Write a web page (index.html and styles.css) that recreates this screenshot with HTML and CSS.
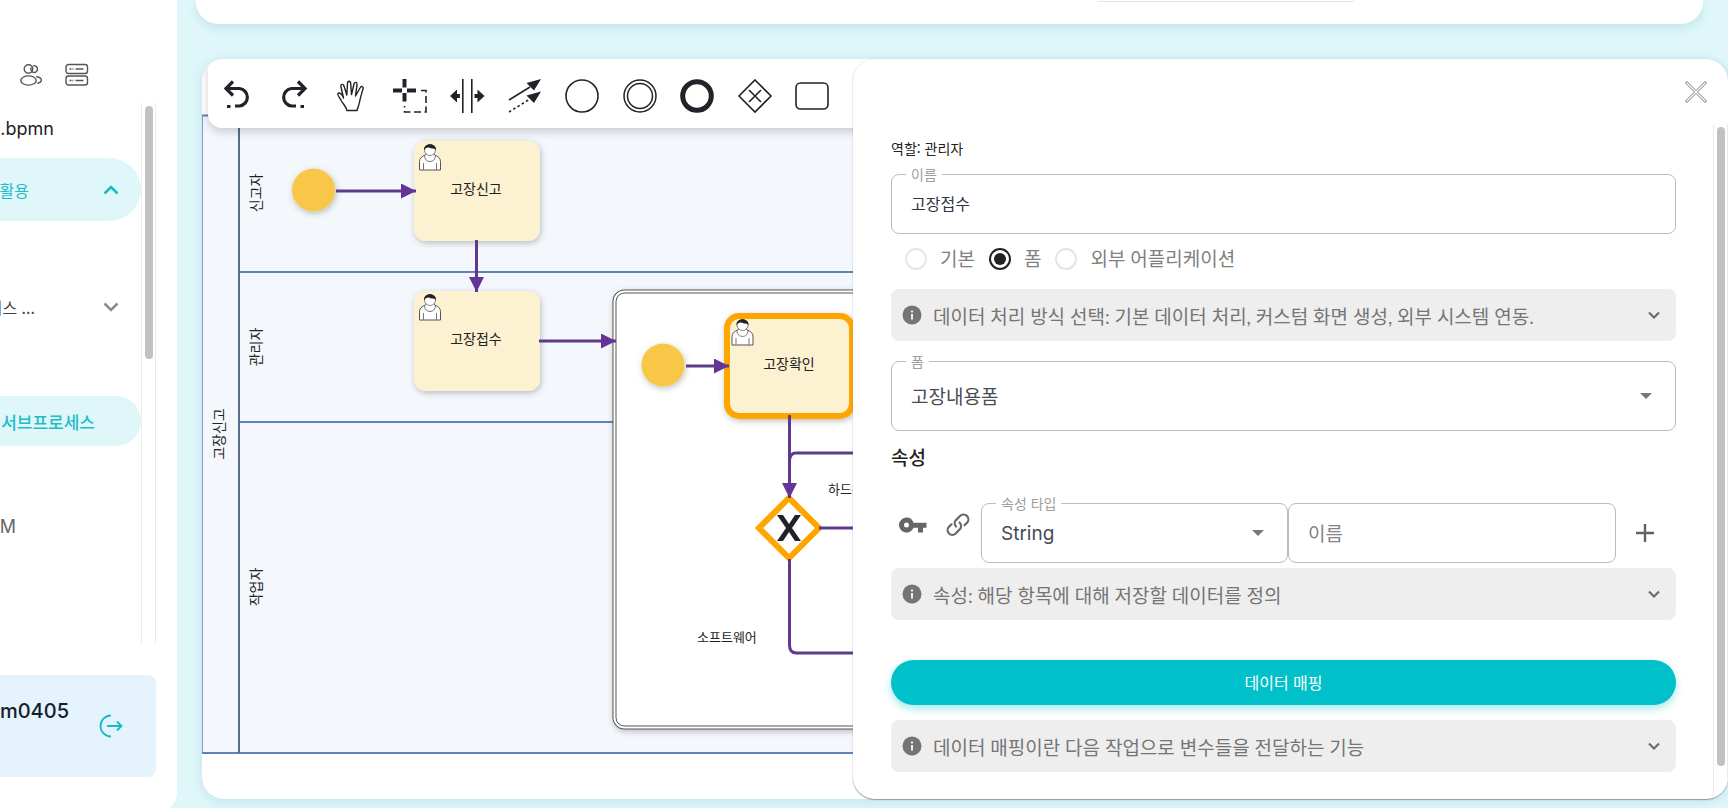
FILE: index.html
```
<!DOCTYPE html>
<html lang="ko">
<head>
<meta charset="utf-8">
<title>고장신고</title>
<link rel="stylesheet" href="styles.css">
</head>
<body>
<div class="app">
  <aside class="sidebar">
    <div class="quick">
      <button class="icon-btn" aria-label="사용자"><svg width="24" height="24" viewBox="0 0 24 24" fill="none" stroke="#555" stroke-width="1.4"><circle cx="9.5" cy="6" r="4.3"/><path d="M14 2.8a3.4 3.4 0 1 1-.6 6.2M12.500 4.500a3.400 3.400 0 0 0 .9 4.600"/><ellipse cx="9.500" cy="17.500" rx="7.700" ry="4.600"/><path d="M17.700 13.700c3 .5 4.700 1.800 4.700 3.400s-1.300 2.600-3.600 3.100" stroke-linecap="round"/></svg></button>
      <button class="icon-btn" aria-label="서버"><svg width="24" height="24" viewBox="0 0 24 24" fill="none" stroke="#555" stroke-width="1.4"><rect x="1" y="1.500" width="21.500" height="9" rx="2.500"/><rect x="1" y="13" width="21.500" height="9" rx="2.500"/><path d="M4.500 6h2m1 0h1m2 0h8M4.500 17.500h2m1 0h1m2 0h8"/></svg></button>
    </div>
    <nav class="side-scroll">
      <div class="side-list">
        <a class="item file" href="#"><span class="cut cut-file">.bpmn</span></a>
        <a class="item group active" href="#"><span class="cut cut-group">활용</span><svg class="chev" width="16" height="10" viewBox="0 0 16 10"><path d="M1.500 8.500 8 2l6.500 6.500"/></svg></a>
        <a class="item group closed" href="#"><span class="cut cut-more">비스 ...</span><svg class="chev" width="16" height="10" viewBox="0 0 16 10"><path d="M1.500 1.500 8 8l6.500-6.500"/></svg></a>
        <a class="item leaf active" href="#"><span class="cut cut-leaf">서브프로세스</span></a>
        <a class="item last" href="#"><span class="cut cut-last">M</span></a>
      </div>
      <div class="track side-track"><div class="thumb side-thumb"></div></div>
    </nav>
    <div class="user">
      <span class="cut cut-user">m0405</span>
      <button class="icon-btn logout" aria-label="로그아웃"><svg width="24" height="24" viewBox="0 0 24 24" fill="none" stroke="#11bccb" stroke-width="1.800"><path d="M12 1.500a10.500 10.500 0 0 0 0 21M8 12h14M18 7.500l4.500 4.500-4.500 4.500"/></svg></button>
    </div>
  </aside>

  <main class="main">
    <section class="top-card"><div class="top-box"></div></section>
    <section class="board">
      <div class="canvas">
        <svg class="diagram" width="100%" height="100%" font-size="14">
          <defs>
            <filter id="soft" x="-20%" y="-20%" width="140%" height="150%"><feDropShadow dx="1" dy="2" stdDeviation="3" flood-color="#000" flood-opacity=".25"/></filter>
            <marker id="tip" markerUnits="userSpaceOnUse" markerWidth="16" markerHeight="16" refX="15" refY="7.500" orient="auto"><path d="M0 0 15 7.500 0 15z" fill="#663399"/></marker>
            <g id="person"><path d="M-10.500 24V15.500q0-4.500 6-6.500l1.500-3.500h6l1.500 3.500q6 2 6 6.500V24z" fill="#fff" stroke="#555" stroke-width="1"/><path d="M-6.500 24v-7M6.500 24v-7M-5.500 9.500c0 8 11 8 11 0" fill="none" stroke="#777"/><circle cy="4" r="5.500" fill="#fff" stroke="#555" stroke-width=".7"/><path d="M-6 4.500C-7-4 7-4 6 4.500 4.500 1.500 2.500 3.500 0 2-2 1-4.500 1.500-6 4.500z" fill="#222"/></g>
          </defs>
          <g transform="translate(-202 -59)">
            <rect x="202" y="115" width="1600" height="638" fill="#f4f8fc"/>
            <path d="M202.500 115v638" stroke="#7a9ccf"/>
            <path d="M202 115.500h1600M240 272h1600M240 422h1600M202 753h1600" stroke="#5f82b8" stroke-width="2"/>
            <path d="M239 115v638" stroke="#5a6c8c" stroke-width="2"/>
            <g class="lane-names">
              <text transform="translate(224 434) rotate(-90)">고장신고</text>
              <text transform="translate(261 193) rotate(-90)">신고자</text>
              <text transform="translate(261 347) rotate(-90)">관리자</text>
              <text transform="translate(261 587) rotate(-90)">작업자</text>
            </g>
            <rect x="614.500" y="291.500" width="500" height="436" rx="10" fill="#fff" stroke="#555" stroke-width="4" filter="url(#soft)"/>
            <rect x="614.500" y="291.500" width="500" height="436" rx="10" fill="none" stroke="#fff" stroke-width="2"/>
            <g filter="url(#soft)">
              <rect x="414" y="141" width="126" height="100" rx="12" fill="#fcf1d0"/>
              <rect x="414" y="291" width="126" height="100" rx="12" fill="#fcf1d0"/>
              <circle cx="313.500" cy="190" r="21.500" fill="#f9c747"/>
              <circle cx="663" cy="365" r="21.500" fill="#f9c747"/>
              <rect x="727" y="316" width="125" height="100" rx="12" fill="#fcf1d0" stroke="#ffa500" stroke-width="6"/>
            </g>
            <path d="M789 498 819 528 789 558 759 528z" fill="#fff" stroke="#ffa500" stroke-width="6"/>
            <path d="M777 515h6l6 9 6-9h6l-9 13 9 13h-6l-6-9-6 9h-6l9-13z" fill="#222328"/>
            <g fill="none" stroke="#5f3a8c" stroke-width="3" >
              <g marker-end="url(#tip)">
                <path d="M336 191h80"/><path d="M476.500 240v52"/><path d="M539 341h77"/><path d="M686 366h43"/><path d="M789.500 415v83"/>
              </g>
              <path d="M789.500 462q0-9 6-9H900M819 528h80M789.500 559v86q0 8 7 8H900"/>
            </g>
            <use href="#person" x="430" y="146"/><use href="#person" x="430" y="296"/><use href="#person" x="742.500" y="321"/>
            <g class="node-names">
              <text x="476" y="194">고장신고</text><text x="476" y="344">고장접수</text><text x="789" y="369">고장확인</text>
            </g>
            <g class="edge-names"><text x="828" y="494">하드웨어</text><text x="697" y="642">소프트웨어</text></g>
          </g>
        </svg>
        <div class="toolbar">
          <button class="tool" aria-label="실행 취소"><svg width="34" height="34" viewBox="0 0 34 34" fill="none" stroke="#222328" stroke-width="3.200"><path d="M13 2.500 6 9.500l7 7M6 9.500h13.500a8.800 8.800 0 0 1 0 17.500H15M7 27.500h3.500"/></svg></button>
          <button class="tool" aria-label="다시 실행"><svg width="34" height="34" viewBox="0 0 34 34" fill="none" stroke="#222328" stroke-width="3.200"><path d="m20 2.500 7 7-7 7M27 9.500H13.500a8.800 8.800 0 0 0 0 17.500H18M22.500 27.500H26"/></svg></button>
          <button class="tool" aria-label="손 도구"><svg width="34" height="34" viewBox="0 0 34 34" fill="#fff" stroke="#222328" stroke-width="1.400" stroke-linejoin="round"><path d="M12 31.500c-1-4-3.500-6-5.500-9.500-1.500-3-4.500-6-3.500-7.500 1.500-1.500 4.500 1 5.500 4.500L6 8c-.6-3 2.300-3.500 3-1l2.800 9L12.500 4.500c0-3 3-3 3.200 0l.8 11L19 5c.7-2.500 3.500-2 3 .8L20.500 17l4.500-8c1.300-2.500 3.800-1.300 3 1-1.500 5-2.500 8-3.500 13-.5 3-1.500 5-2.500 8.500z"/></svg></button>
          <button class="tool" aria-label="올가미"><svg width="34" height="34" viewBox="0 0 34 34" fill="none" stroke="#222328"><path stroke-width="4" d="M11.500 0v8.500M11.500 14v8.500M0 11.500h9M14 11.500h9"/><path stroke-width="1.600" stroke-dasharray="7 3.500" d="M28 11.500h5v21.500h-21.500v-6"/></svg></button>
          <button class="tool" aria-label="공간 도구"><svg width="34" height="34" viewBox="0 0 34 34" fill="#222328"><path d="M12 0h1.600v34H12zM21 0h1.600v34H21zM0 17l7-6.500V15h3v4H7v4.500zM34.500 17l-7-6.500V15h-3v4h3v4.500z"/></svg></button>
          <button class="tool" aria-label="연결 도구"><svg width="34" height="34" viewBox="0 0 34 34" fill="#222328"><path d="M33 0 26 11.500 18.500 4zM33 12.500 26 24l-7.500-7.500z"/><path d="M1 21 22 8" stroke="#222328" stroke-width="1.600"/><path d="m1 33 21-13" stroke="#222328" stroke-width="1.600" stroke-dasharray="2.500 2.500"/></svg></button>
          <button class="tool" aria-label="시작 이벤트"><svg width="34" height="34" viewBox="0 0 34 34" fill="none" stroke="#222328" stroke-width="1.600"><circle cx="17" cy="17" r="16"/></svg></button>
          <button class="tool" aria-label="중간 이벤트"><svg width="34" height="34" viewBox="0 0 34 34" fill="none" stroke="#222328" stroke-width="1.500"><circle cx="17" cy="17" r="16"/><circle cx="17" cy="17" r="12.500"/></svg></button>
          <button class="tool" aria-label="종료 이벤트"><svg width="34" height="34" viewBox="0 0 34 34" fill="none" stroke="#222328" stroke-width="5"><circle cx="17" cy="17" r="14.300"/></svg></button>
          <button class="tool" aria-label="게이트웨이"><svg width="34" height="34" viewBox="0 0 34 34" fill="none" stroke="#222328" stroke-width="1.600"><path d="m17 1 16 16-16 16L1 17zM11 11l12 12M23 11 11 23"/></svg></button>
          <button class="tool" aria-label="작업"><svg width="34" height="34" viewBox="0 0 34 34" fill="none" stroke="#222328" stroke-width="1.600"><rect x="1" y="4" width="32" height="26" rx="4.500"/></svg></button>
          <button class="tool" aria-label="서브 프로세스"><svg width="34" height="34" viewBox="0 0 34 34" fill="none" stroke="#222328" stroke-width="1.600"><rect x="1" y="6" width="32" height="22" rx="4"/></svg></button>
        </div>
      </div>

      <section class="panel">
        <header class="panel-head">
          <button class="icon-btn" aria-label="닫기"><svg width="22" height="22" viewBox="0 0 22 22" fill="#fff" stroke="#444" stroke-width=".7"><path d="M1 2.500V1h1.500L11 9.500 19.500 1H21v1.500L12.500 11l8.500 8.500V21h-1.500L11 12.500 2.500 21H1v-1.500L9.500 11z"/></svg></button>
        </header>
        <div class="panel-scroll">
          <form class="form">
            <p class="role">역할: 관리자</p>
            <div class="field">
              <label for="name">이름</label>
              <input id="name" class="control" type="text" value="고장접수">
            </div>
            <div class="radios">
              <label class="radio"><input type="radio" name="kind"><span>기본</span></label>
              <label class="radio"><input type="radio" name="kind" checked><span>폼</span></label>
              <label class="radio"><input type="radio" name="kind"><span>외부 어플리케이션</span></label>
            </div>
            <button type="button" class="hint"><svg width="20" height="20" viewBox="0 0 20 20"><circle cx="10" cy="10" r="9.500" fill="#757575"/><path d="M9 9h2v5.500H9zM9 5.500h2v2H9z" fill="#eee"/></svg><span>데이터 처리 방식 선택: 기본 데이터 처리, 커스텀 화면 생성, 외부 시스템 연동.</span><svg width="12" height="8" viewBox="0 0 12 8"><path class="hint-chev" d="m1 1.500 5 5 5-5"/></svg></button>
            <div class="field field-form">
              <label for="form">폼</label>
              <select id="form" class="control tall"><option>고장내용폼</option></select>
              <svg class="caret" width="12" height="6" viewBox="0 0 12 6"><path d="M0 0h12L6 6z"/></svg>
            </div>
            <h2 class="title">속성</h2>
            <div class="attrs">
              <button type="button" class="icon-btn key" aria-label="키"><svg width="28" height="16" viewBox="0 0 28 16"><path fill="#666" fill-rule="evenodd" d="M7.500.5a7.500 7.500 0 1 0 7 10.200H19V15.500h5v-4.800h3.500v-5h-13A7.500 7.500 0 0 0 7.500.5zm0 5a2.500 2.500 0 1 1 0 5 2.500 2.500 0 0 1 0-5z"/></svg></button>
              <button type="button" class="icon-btn link" aria-label="연결"><svg width="24" height="24" viewBox="0 0 24 24" fill="none" stroke="#666" stroke-width="2.200" stroke-linecap="round"><path d="M10 13.500a4.700 4.700 0 0 1 0-6.500l4-4a4.700 4.700 0 0 1 7 6.700l-2.500 2.500"/><path d="M13.500 9.500a4.700 4.700 0 0 1 .5 6.500l-4.300 4.500A4.700 4.700 0 0 1 3 13.800l2.500-2.500"/></svg></button>
              <div class="field type">
                <label for="type">속성 타입</label>
                <select id="type" class="control latin"><option>String</option></select>
                <svg class="caret" width="12" height="6" viewBox="0 0 12 6"><path d="M0 0h12L6 6z"/></svg>
              </div>
              <div class="field attr-name">
                <input class="control large" type="text" placeholder="이름" aria-label="이름">
              </div>
              <button type="button" class="icon-btn add" aria-label="추가"><svg width="18" height="18" viewBox="0 0 18 18"><path d="M9 0v18M0 9h18" stroke="#616161" stroke-width="2.400"/></svg></button>
            </div>
            <button type="button" class="hint"><svg width="20" height="20" viewBox="0 0 20 20"><circle cx="10" cy="10" r="9.500" fill="#757575"/><path d="M9 9h2v5.500H9zM9 5.500h2v2H9z" fill="#eee"/></svg><span>속성: 해당 항목에 대해 저장할 데이터를 정의</span><svg width="12" height="8" viewBox="0 0 12 8"><path class="hint-chev" d="m1 1.500 5 5 5-5"/></svg></button>
            <button type="button" class="mapping">데이터 매핑</button>
            <button type="button" class="hint"><svg width="20" height="20" viewBox="0 0 20 20"><circle cx="10" cy="10" r="9.500" fill="#757575"/><path d="M9 9h2v5.500H9zM9 5.500h2v2H9z" fill="#eee"/></svg><span>데이터 매핑이란 다음 작업으로 변수들을 전달하는 기능</span><svg width="12" height="8" viewBox="0 0 12 8"><path class="hint-chev" d="m1 1.500 5 5 5-5"/></svg></button>
          </form>
          <div class="track panel-track"><div class="thumb panel-thumb"></div></div>
        </div>
      </section>
    </section>
  </main>
</div>
</body>
</html>
```
FILE: styles.css
```
* { box-sizing: border-box; }
body { margin: 0; background: #dff7f9; color: #222; font-family: "Noto Sans CJK KR", "Noto Sans", sans-serif; }
button, input, select { font: inherit; }
a { color: inherit; text-decoration: none; }
.app { display: flex; height: 100vh; overflow: hidden; }
.icon-btn { display: flex; align-items: center; justify-content: center; padding: 0; border: 0; background: none; cursor: pointer; }

/* Sidebar */
.sidebar { display: flex; flex-direction: column; flex: none; width: 177px; height: calc(100vh + 4px); background: #fff; border-radius: 0 0 20px 0; }
.quick { display: flex; gap: 22px; padding: 63px 0 16px 19px; }
.side-scroll { display: flex; flex: 1; width: 156px; min-height: 0; }
.side-list { flex: 1; min-width: 0; }
.item { display: flex; align-items: center; color: #444; }
.cut { display: flex; justify-content: flex-end; overflow: hidden; white-space: nowrap; }
.file { height: 55px; padding-bottom: 4px; color: #222; font: 18px Inter, sans-serif; }
.cut-file { width: 54px; }
.group { justify-content: space-between; height: 63px; padding-right: 22px; border-radius: 0 32px 32px 0; font-size: 16px; }
.cut-group { width: 29px; }
.cut-more { width: 35px; }
.closed { margin-top: 54px; }
.leaf { height: 50px; margin-top: 58px; border-radius: 0 25px 25px 0; font-size: 17px; font-weight: 500; }
.cut-leaf { width: 95px; }
.last { height: 50px; margin-top: 55px; color: #666; font: 18px Inter, sans-serif; }
.cut-last { width: 16px; }
.active { background: #dff7f8; color: #1fbccb; }
.chev { fill: none; stroke: #8c8c8c; stroke-width: 2.5px; }
.active .chev { stroke: #18bcc8; }
.track { border: solid #ebebeb; border-width: 0 1px; background: #fff; }
.thumb { width: 8px; border-radius: 4px; background: #c1c1c1; }
.side-track { width: 15px; padding: 3px 0 0 3px; }
.side-thumb { height: 253px; }
.user { display: flex; align-items: center; justify-content: space-between; width: 156px; height: 102px; margin: 31px 0 35px; padding-right: 33px; border-radius: 0 8px 8px 0; background: #e5f3fc; }
.cut-user { width: 69px; padding-bottom: 30px; color: #14202c; font: 500 20px Inter, sans-serif; }

/* Main */
.main { display: flex; flex: 1; flex-direction: column; gap: 35px; min-width: 0; padding: 0 0 9px 19px; }
.top-card { flex: none; height: 24px; margin-right: 25px; border-radius: 0 0 22px 22px; background: #fff; box-shadow: 0 4px 10px rgba(150, 190, 220, .35); }
.top-box { width: 258px; height: 2px; margin-left: 901px; border-bottom: 1px solid #e4e6ea; border-radius: 0 0 6px 6px; }
.board { display: grid; flex: 1; grid-template-columns: 651px minmax(0, 1fr); grid-template-rows: minmax(0, 1fr); min-height: 0; margin-left: 6px; border-radius: 22px; background: #fff; box-shadow: 0 2px 12px rgba(150, 190, 220, .4); }
.canvas { display: grid; grid-area: 1 / 1 / 2 / 3; overflow: hidden; border-radius: 22px; }
.diagram { grid-area: 1 / 1; fill: #222; }
.lane-names, .node-names { text-anchor: middle; }
.edge-names { font-size: 13px; }
.toolbar { display: flex; grid-area: 1 / 1; align-self: start; justify-content: space-between; width: 700px; margin-left: 6px; padding: 20px 21px 15px 12px; border-radius: 0 0 14px 14px; background: #fff; box-shadow: 0 4px 10px rgba(0, 0, 0, .18); }
.tool { display: flex; padding: 0; border: 0; background: none; }
.tool svg { overflow: visible; }

/* Property panel */
.panel { display: flex; flex-direction: column; grid-area: 1 / 2; z-index: 1; min-height: 0; overflow: hidden; border-radius: 22px; background: #fff; box-shadow: 0 1px 1px #999, 0 0 3px rgba(0, 0, 0, .1); }
.panel-head { display: flex; flex: none; align-items: center; justify-content: flex-end; height: 65px; padding-right: 21px; }
.panel-scroll { display: flex; flex: 1; min-height: 0; }
.form { display: flex; flex: 1; flex-direction: column; min-width: 0; padding: 14px 37px 0 38px; }
.panel-track { width: 15px; padding: 3px 0 0 3px; }
.panel-thumb { height: 639px; }
.role { height: 20px; margin: 0 0 16px; font-size: 14px; line-height: 20px; }
.field { position: relative; display: flex; }
.field label { position: absolute; top: -10px; left: 15px; padding: 0 5px; background: #fff; color: #9e9e9e; font-size: 14px; line-height: 20px; }
.control { flex: 1; width: 100%; min-width: 0; height: 60px; padding: 0 19px 2px; border: 1px solid #bdbdbd; border-radius: 8px; background: #fff; color: #2f3440; font-size: 16px; appearance: none; outline: 0; }
.tall { height: 70px; color: #474c57; font-size: 19px; }
.latin { padding-bottom: 0; color: #454c5a; font: 19px Inter, sans-serif; }
.large { font-size: 19px; }
.control::placeholder { color: #808489; opacity: 1; }
.caret { position: absolute; top: 50%; right: 24px; margin-top: -3px; fill: #757a80; }
.radios { display: flex; align-items: center; gap: 14px; height: 50px; margin-bottom: 5px; padding-left: 14px; }
.radio { display: flex; align-items: center; gap: 13px; color: #808080; font-family: Lato, "Noto Sans CJK KR", sans-serif; font-size: 19px; line-height: 28px; }
.radio input { display: grid; place-items: center; width: 22px; height: 22px; margin: 0; border: 2px solid #e2e5ec; border-radius: 50%; background: #fff; appearance: none; }
.radio input:checked { border-color: #222; }
.radio input:checked::before { width: 12px; height: 12px; border-radius: 50%; background: #222; content: ""; }
.hint { display: flex; flex: none; align-items: center; gap: 11px; height: 52px; padding: 0 16px 0 11px; border: 0; border-radius: 8px; background: #eee; color: #757575; font-family: Lato, "Noto Sans CJK KR", sans-serif; font-size: 19px; text-align: left; }
.hint span { flex: 1; white-space: nowrap; }
.hint-chev { fill: none; stroke: #666; stroke-width: 2px; }
.field-form { margin-top: 20px; }
.title { height: 28px; margin: 12px 0 32px; font-size: 19px; font-weight: 500; line-height: 28px; }
.attrs { display: flex; align-items: center; margin-bottom: 5px; }
.key { width: 28px; margin: 0 19px 16px 8px; }
.link { width: 24px; margin: 0 11px 16px 0; }
.type { flex: 307; }
.attr-name { flex: 328; }
.add { width: 18px; margin: 0 22px 0 20px; }
.mapping { flex: none; height: 45px; margin: 40px 0 15px; padding: 0 0 2px; border: 0; border-radius: 23px; background: #00c1ca; box-shadow: 0 4px 9px rgba(0, 193, 202, .35); color: #fff; font-size: 16px; }
```
